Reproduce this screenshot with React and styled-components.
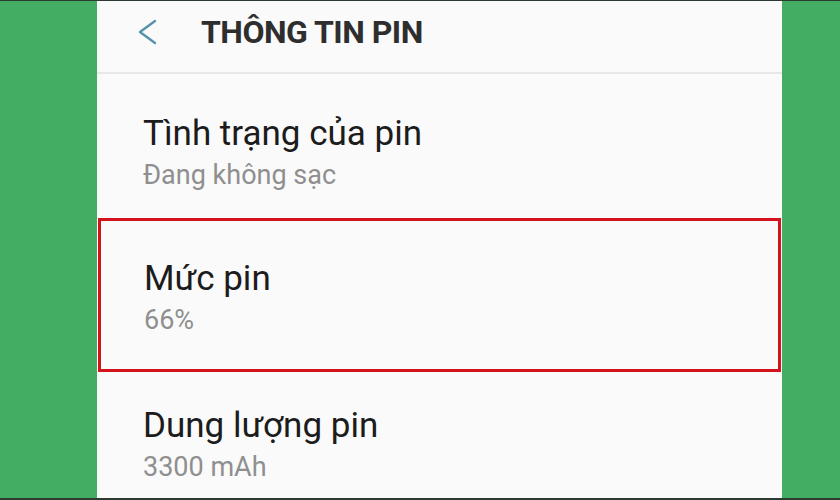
import React from 'react';
import styled, { createGlobalStyle } from 'styled-components';

const ROWS = [
  { id: 0, title: 'Tình trạng của pin', value: 'Đang không sạc', padTop: 40 },
  { id: 1, title: 'Mức pin', value: '66%', padTop: 38, highlighted: true },
  { id: 2, title: 'Dung lượng pin', value: '3300 mAh', padTop: 34 },
];

const GlobalStyle = createGlobalStyle`
  html, body {
    margin: 0;
    padding: 0;
    width: 840px;
    height: 500px;
    overflow: hidden;
    background: #42ad63;
  }
`;

const App = () => {
  return (
    <>
      <GlobalStyle />
      <Frame>
        <Phone>
          <Header>
            <BackBtn>
              <svg width="22" height="28" viewBox="0 0 22 28" fill="none">
                <polyline
                  points="18,3 3,14 18,25"
                  stroke="#5593ab"
                  strokeWidth="2.4"
                  strokeLinecap="round"
                  strokeLinejoin="round"
                />
              </svg>
            </BackBtn>
            <HeaderTitle>THÔNG TIN PIN</HeaderTitle>
          </Header>
          <List>
            {ROWS.map(({ id, title, value, padTop, highlighted }) => (
              <Row key={id} padTop={padTop} highlighted={highlighted}>
                <RowTitle>{title}</RowTitle>
                <RowValue>{value}</RowValue>
              </Row>
            ))}
          </List>
        </Phone>
      </Frame>
    </>
  );
};

export default App;

const Frame = styled.div`
  display: flex;
  width: 840px;
  height: 500px;
  box-sizing: border-box;
  border-top: 1px solid #2c3a30;
  border-bottom: 2px solid #2c3a30;
  background: #42ad63;
  padding-left: 97px;
`;

const Phone = styled.div`
  width: 685px;
  height: 100%;
  background: #fafafa;
  overflow: hidden;
  font-family: Roboto, 'Noto Sans', sans-serif;
`;

const Header = styled.div`
  display: flex;
  align-items: center;
  height: 73px;
  border-bottom: 2px solid #e8e8e8;
  box-sizing: border-box;
  padding: 0 0 9px 40px;
`;

const BackBtn = styled.div`
  display: flex;
  align-items: center;
  width: 22px;
  height: 28px;
  margin-right: 42px;
`;

const HeaderTitle = styled.h1`
  margin: 0;
  font-size: 32px;
  line-height: 38px;
  font-weight: 700;
  color: #2e2e2e;
  letter-spacing: -0.5px;
`;

const List = styled.div`
  display: flex;
  flex-direction: column;
`;

const Row = styled.div`
  display: flex;
  flex-direction: column;
  box-sizing: border-box;
  height: ${({ highlighted }) => (highlighted ? '154px' : '144px')};
  margin: ${({ highlighted }) => (highlighted ? '0 1px' : '0')};
  padding: ${({ padTop, highlighted }) =>
    `${padTop}px 0 0 ${highlighted ? 43 : 46}px`};
  border: ${({ highlighted }) =>
    highlighted ? '3px solid #d3121c' : 'none'};
`;

const RowTitle = styled.div`
  font-size: 35px;
  line-height: 40px;
  color: #1c1c1c;
`;

const RowValue = styled.div`
  margin-top: 6px;
  font-size: 27px;
  line-height: 30px;
  color: #8f8f8f;
`;
